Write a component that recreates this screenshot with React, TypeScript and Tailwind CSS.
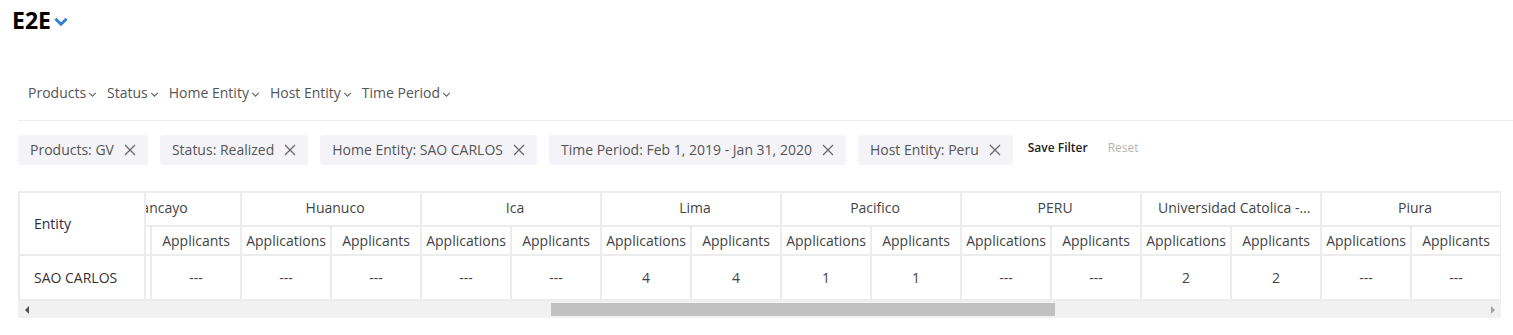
import React, { useEffect, useRef } from "react";

const filterMenus = ["Products", "Status", "Home Entity", "Host Entity", "Time Period"];

const activeFilters = [
  "Products: GV",
  "Status: Realized",
  "Home Entity: SAO CARLOS",
  "Time Period: Feb 1, 2019 - Jan 31, 2020",
  "Host Entity: Peru",
];

// entidades host (las primeras quedan fuera de vista por el scroll)
const hosts = [
  { name: "Arequipa", apps: "---", applicants: "---" },
  { name: "Cajamarca", apps: "---", applicants: "---" },
  { name: "Chiclayo", apps: "---", applicants: "---" },
  { name: "Cusco", apps: "---", applicants: "---" },
  { name: "ESAN", apps: "---", applicants: "---" },
  { name: "Huacho", apps: "---", applicants: "---" },
  { name: "Arequipa UNSA", apps: "---", applicants: "---" },
  { name: "Chimbote", apps: "---", applicants: "---" },
  { name: "Huancayo", apps: "---", applicants: "---" },
  { name: "Huanuco", apps: "---", applicants: "---" },
  { name: "Ica", apps: "---", applicants: "---" },
  { name: "Lima", apps: "4", applicants: "4" },
  { name: "Pacifico", apps: "1", applicants: "1" },
  { name: "PERU", apps: "---", applicants: "---" },
  { name: "Universidad Catolica - Lima", apps: "2", applicants: "2" },
  { name: "Piura", apps: "---", applicants: "---" },
  { name: "PUCP", apps: "---", applicants: "---" },
  { name: "San Marcos", apps: "---", applicants: "---" },
  { name: "Trujillo", apps: "---", applicants: "---" },
  { name: "UNI", apps: "---", applicants: "---" },
  { name: "UPC", apps: "---", applicants: "---" },
  { name: "USIL", apps: "---", applicants: "---" },
  { name: "Tacna", apps: "---", applicants: "---" },
];

const Chevron = ({ className }: { className?: string }) => (
  <svg viewBox="0 0 10 6" className={className} fill="none" stroke="currentColor">
    <path d="M1 1l4 4 4-4" />
  </svg>
);

const CloseIcon = () => (
  <svg viewBox="0 0 12 12" className="w-[12px] h-[12px] text-[#666]" fill="none" stroke="currentColor" strokeWidth="1.2">
    <path d="M1 1l10 10M11 1L1 11" />
  </svg>
);

const App = () => {
  const scrollRef = useRef<HTMLDivElement>(null);

  useEffect(() => {
    if (scrollRef.current) scrollRef.current.scrollLeft = 1524;
  }, []);

  return (
    <div className="w-[1513px] h-[335px] bg-white text-[#444] font-['Open_Sans',sans-serif] overflow-hidden">
      <div className="h-[40px] pl-[12px] flex items-center">
        <span className="text-[23px] leading-none font-bold text-black">E2E</span>
        <Chevron className="w-[14px] h-[9px] ml-[3px] mt-[2px] text-[#2f7fd8] stroke-2" />
      </div>

      <div className="ml-[18px] pt-[43px] pb-[17px] border-b border-[#ececec]">
        <div className="h-[20px] pl-[10px] flex items-center gap-[10px] text-[14px] leading-none text-[#555]">
          {filterMenus.map((m) => (
            <div key={m} className="flex items-center gap-[2px]">
              <span>{m}</span>
              <Chevron className="w-[9px] h-[5px] mt-[2px] text-[#666] stroke-[1.3]" />
            </div>
          ))}
        </div>
      </div>

      <div className="ml-[18px] mt-[14px] h-[30px] flex items-center gap-[12px]">
        {activeFilters.map((f) => (
          <div key={f} className="h-[30px] px-[12px] flex items-center gap-[10px] bg-[#f4f4f8] rounded-[3px] text-[14px] leading-none text-[#555]">
            <span>{f}</span>
            <CloseIcon />
          </div>
        ))}
        <span className="ml-[3px] -mt-[5px] text-[12px] font-semibold text-[#222]">Save Filter</span>
        <span className="ml-[8px] -mt-[5px] text-[12px] text-[#b5b5b5]">Reset</span>
      </div>

      <div className="ml-[18px] mt-[26px] w-[1483px]">
        <div ref={scrollRef} className="overflow-hidden border-l-2 border-t-2 border-[#ececec]">
          <table className="border-separate border-spacing-0 table-fixed w-[4266px] text-[14px] text-[#444]">
            <colgroup>
              <col className="w-[126px]" />
              {hosts.map((h) => (
                <React.Fragment key={h.name}>
                  <col className="w-[90px]" />
                  <col className="w-[90px]" />
                </React.Fragment>
              ))}
            </colgroup>
            <thead>
              <tr className="h-[34px]">
                <th
                  rowSpan={2}
                  className="sticky left-0 z-10 bg-white border-r-2 border-b-2 border-[#ececec] pl-[14px] text-left font-normal text-[#2b2b45]"
                >
                  Entity
                </th>
                {hosts.map((h) => (
                  <th
                    key={h.name}
                    colSpan={2}
                    className="border-r-2 border-b-2 border-[#ececec] font-normal pl-[16px] pr-[8px] pb-[4px] truncate"
                  >
                    {h.name}
                  </th>
                ))}
              </tr>
              <tr className="h-[29px]">
                {hosts.map((h) => (
                  <React.Fragment key={h.name}>
                    <th className="border-r-2 border-b-2 border-[#ececec] font-normal whitespace-nowrap">Applications</th>
                    <th className="border-r-2 border-b-2 border-[#ececec] font-normal whitespace-nowrap">Applicants</th>
                  </React.Fragment>
                ))}
              </tr>
            </thead>
            <tbody>
              <tr className="h-[45px]">
                <td className="sticky left-0 z-10 bg-white border-r-2 border-b-2 border-[#ececec] pl-[14px] text-[#333]">
                  SAO CARLOS
                </td>
                {hosts.map((h) => (
                  <React.Fragment key={h.name}>
                    <td className="border-r-2 border-b-2 border-[#ececec] text-center">{h.apps}</td>
                    <td className="border-r-2 border-b-2 border-[#ececec] text-center">{h.applicants}</td>
                  </React.Fragment>
                ))}
              </tr>
            </tbody>
          </table>
        </div>

        {/* scrollbar */}
        <div className="h-[17px] bg-[#f1f1f1] flex items-center">
          <div className="w-[17px] h-[17px] flex items-center justify-center">
            <div className="w-0 h-0 border-y-[4px] border-y-transparent border-r-[4px] border-r-[#505050]" />
          </div>
          <div className="flex-1 h-[17px] flex items-center">
            <div className="ml-[516px] w-[504px] h-[13px] bg-[#c1c1c1]" />
          </div>
          <div className="w-[17px] h-[17px] flex items-center justify-center">
            <div className="w-0 h-0 border-y-[4px] border-y-transparent border-l-[4px] border-l-[#a3a3a3]" />
          </div>
        </div>
      </div>
    </div>
  );
};

export default App;
